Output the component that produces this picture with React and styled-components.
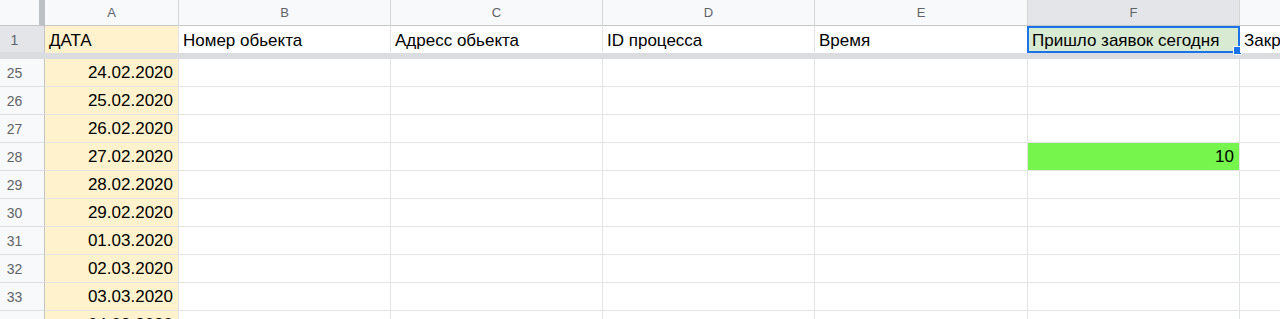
import React from 'react';
import styled, { createGlobalStyle } from 'styled-components';

const COLS = '45px 134px 212px 212px 212px 213px 212px 200px';

const GlobalStyle = createGlobalStyle`
    html, body {
        margin: 0;
        padding: 0;
        background: #fff;
    }
    body {
        font-family: 'Liberation Sans', Arial, sans-serif;
    }
`;

const Sheet = styled.div`
    width: 1280px;
    height: 319px;
    overflow: hidden;
    background: #fff;
`;

const Row = styled.div`
    display: grid;
    grid-template-columns: ${COLS};
    height: ${p => p.$h}px;
`;

const Corner = styled.div`
    background: #f8f9fa;
    border-bottom: 1px solid #c4c7c5;
    border-right: 6px solid #bdc1c6;
`;

const ColHead = styled.div`
    display: flex;
    align-items: center;
    justify-content: center;
    background: ${p => (p.$active ? '#e3e5e8' : '#f8f9fa')};
    border-right: 1px solid #d3d5d7;
    border-bottom: 1px solid #c4c7c5;
    color: #5f6368;
    font-size: 13px;
`;

const RowHead = styled.div`
    display: flex;
    align-items: center;
    justify-content: center;
    padding: ${p => (p.$active ? '2px' : '1px')} 15px 0 0;
    background: ${p => (p.$active ? '#e3e5e8' : '#f8f9fa')};
    border-right: 1px solid #c4c7c5;
    border-bottom: 1px solid #dcdee0;
    color: #5f6368;
    font-size: 14px;
`;

const Cell = styled.div`
    position: relative;
    display: flex;
    align-items: center;
    justify-content: ${p => (p.$right ? 'flex-end' : 'flex-start')};
    padding: ${p => (p.$head ? '3px' : '1px')} 5px 0 4px;
    background: ${p => p.$bg || '#fff'};
    border-right: 1px solid #e2e3e3;
    border-bottom: 1px solid ${p => (p.$head ? 'transparent' : '#e2e3e3')};
    color: #000;
    font-size: 17px;
    white-space: nowrap;
`;

const Selection = styled.div`
    position: absolute;
    inset: 0 -1px -1px -1px;
    border: 2px solid #1a73e8;
    pointer-events: none;
`;

const Handle = styled.div`
    position: absolute;
    right: -4px;
    bottom: -4px;
    width: 7px;
    height: 7px;
    background: #1a73e8;
    border: 1px solid #fff;
`;

const FreezeBar = styled.div`
    height: 6px;
    background: #dadce0;
`;

const letters = ['A', 'B', 'C', 'D', 'E', 'F', ''];

const headers = [
    'ДАТА',
    'Номер обьекта',
    'Адресс обьекта',
    'ID процесса',
    'Время',
    'Пришло заявок сегодня',
    'Закрыто заявок',
];

const rows = [
    { n: 25, date: '24.02.2020' },
    { n: 26, date: '25.02.2020' },
    { n: 27, date: '26.02.2020' },
    { n: 28, date: '27.02.2020', f: '10' },
    { n: 29, date: '28.02.2020' },
    { n: 30, date: '29.02.2020' },
    { n: 31, date: '01.03.2020' },
    { n: 32, date: '02.03.2020' },
    { n: 33, date: '03.03.2020' },
    { n: 34, date: '04.03.2020' },
];

const App = () => {
    return (
        <Sheet>
            <GlobalStyle />
            <Row $h={26}>
                <Corner />
                {letters.map((l, i) => (
                    <ColHead key={i} $active={l === 'F'}>
                        {l}
                    </ColHead>
                ))}
            </Row>
            <Row $h={27}>
                <RowHead $active>1</RowHead>
                {headers.map((h, i) => (
                    <Cell
                        key={i}
                        $head
                        $bg={i === 0 ? '#fff2cc' : i === 5 ? '#d9ead3' : '#fff'}
                    >
                        {h}
                        {i === 5 && (
                            <Selection>
                                <Handle />
                            </Selection>
                        )}
                    </Cell>
                ))}
            </Row>
            <FreezeBar />
            {rows.map(r => (
                <Row key={r.n} $h={28}>
                    <RowHead>{r.n}</RowHead>
                    <Cell $right $bg="#fff2cc">
                        {r.date}
                    </Cell>
                    <Cell />
                    <Cell />
                    <Cell />
                    <Cell />
                    <Cell $right $bg={r.f ? '#76f54c' : '#fff'}>
                        {r.f}
                    </Cell>
                    <Cell />
                </Row>
            ))}
        </Sheet>
    );
};

export default App;
